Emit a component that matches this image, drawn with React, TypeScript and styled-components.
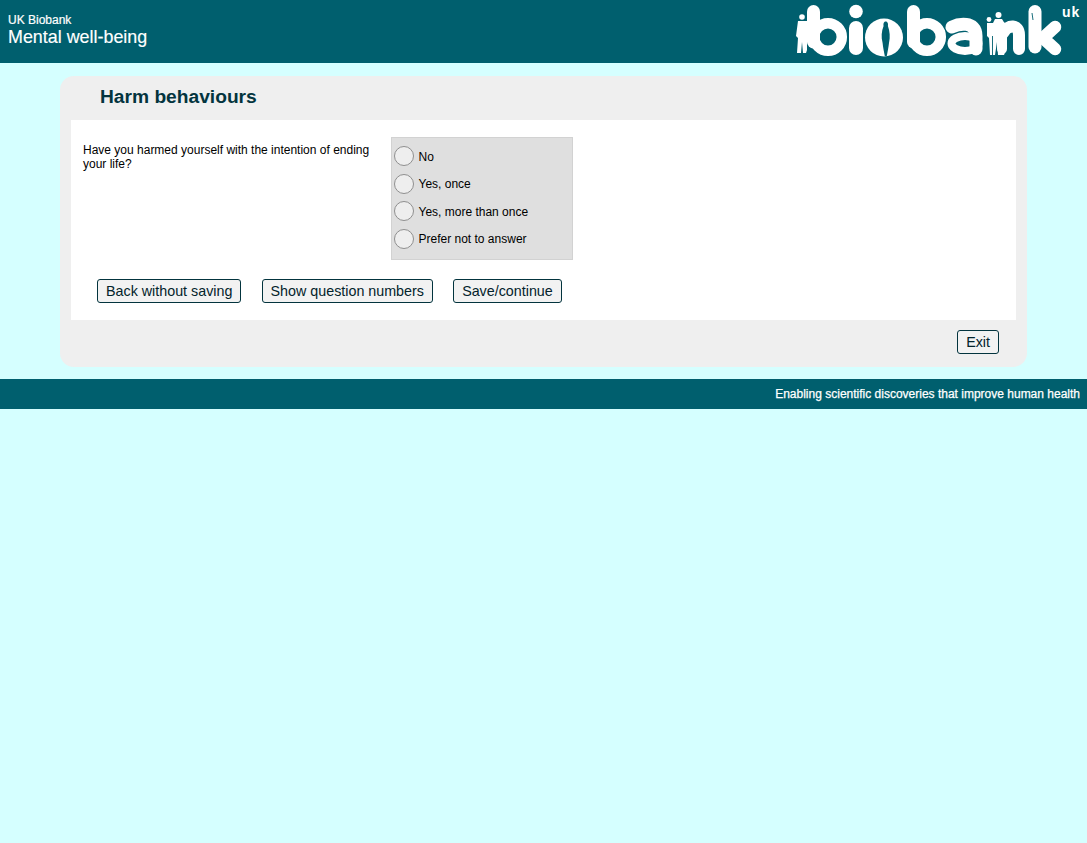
import React from "react"
import styled, { createGlobalStyle } from "styled-components"

const GlobalStyle = createGlobalStyle`
	html, body {
		margin: 0;
		padding: 0;
		background: #d5ffff;
		font-family: "Liberation Sans", Arial, sans-serif;
	}
`

const Page = styled.div`
	min-height: 843px;
	background: #d5ffff;
`

const Header = styled.header`
	height: 63px;
	background: #005f6e;
	color: #fff;
	display: flex;
	justify-content: space-between;
	padding-left: 8px;
`

const Titles = styled.div`
	padding-top: 13px;
`

const Brand = styled.div`
	font-size: 12px;
	line-height: 14px;
	-webkit-text-stroke: 0.2px #fff;
`

const Study = styled.div`
	font-size: 17.9px;
	line-height: 21px;
	-webkit-text-stroke: 0.15px #fff;
`

const Logo = styled.svg`
	width: 307px;
	height: 63px;
	display: block;
`

const Card = styled.main`
	margin: 13px 60px 12px;
	background: #efefef;
	border-radius: 14px;
	padding: 0 11px 13px;
`

const Heading = styled.h1`
	margin: 0;
	height: 44px;
	padding-left: 29px;
	font-size: 19.2px;
	line-height: 41px;
	font-weight: 700;
	color: #03343e;
`

const Body = styled.section`
	background: #fff;
	height: 200px;
	padding: 17px 12px 0;
	box-sizing: border-box;
`

const QuestionRow = styled.div`
	display: flex;
`

const QuestionText = styled.div`
	width: 308px;
	padding-top: 6px;
	font-size: 12px;
	line-height: 14px;
	color: #000;
`

const Options = styled.div`
	width: 182px;
	height: 123px;
	box-sizing: border-box;
	background: #dfdfdf;
	border: 1px solid #d2d2d2;
	padding: 4.25px 0 0 2px;
`

const Option = styled.label`
	display: flex;
	align-items: center;
	height: 27.5px;
	gap: 4.5px;
	font-size: 12px;
	color: #000;
`

const Radio = styled.span`
	width: 20px;
	height: 20px;
	box-sizing: border-box;
	border-radius: 50%;
	background: #eee;
	border: 1.5px solid #8f8f8f;
`

const OptionLabel = styled.span`
	padding-top: 1px;
`

const Actions = styled.div`
	display: flex;
	gap: 20.2px;
	margin-top: 19px;
	padding-left: 14px;
`

const Button = styled.button`
	height: 24px;
	padding: 0 8px;
	box-sizing: border-box;
	font-family: inherit;
	font-size: 14.3px;
	color: #03232b;
	background: #f2f2f2;
	border: 1px solid #03343e;
	border-radius: 3px;
`

const CardFooter = styled.div`
	display: flex;
	justify-content: flex-end;
	padding: 10px 17px 0 0;
`

const Footer = styled.footer`
	height: 30px;
	background: #005f6e;
	color: #fff;
	font-size: 12px;
	line-height: 30px;
	text-align: right;
	padding-right: 7px;
	-webkit-text-stroke: 0.25px #fff;
`

const options = ["No", "Yes, once", "Yes, more than once", "Prefer not to answer"]

const teal = "#005f6e"

// logo is drawn in page coordinates, so the viewBox starts at x 780
function BiobankLogo() {
	return (
		<Logo viewBox="780 0 307 63" aria-label="biobank uk">
			<g fill="none" stroke="#fff" strokeLinecap="round">
				{/* first b */}
				<path d="M813.5 11.5V42" strokeWidth="13" />
				<circle cx="828" cy="37" r="13.8" strokeWidth="10.5" />
				{/* i */}
				<path d="M856 28V48" strokeWidth="14" />
				{/* second b */}
				<path d="M913.5 11.5V42" strokeWidth="13" />
				<circle cx="927" cy="37" r="13.8" strokeWidth="10.5" />
				{/* a */}
				<ellipse cx="965" cy="43.5" rx="13.5" ry="7.5" strokeWidth="8" />
				<path d="M952 27C958 24 976 20 976 36V49" strokeWidth="13" />
				{/* n */}
				<path d="M1002 27V49" strokeWidth="10" />
				<path d="M1003 33C1008 24 1019 24 1019 35V49" strokeWidth="12" />
				{/* k */}
				<path d="M1035 11.5V47" strokeWidth="13" />
				<path d="M1055 27L1043 38L1055 49" strokeWidth="12.5" />
			</g>
			<g fill="#fff">
				{/* dot of the i */}
				<circle cx="856" cy="11.5" r="6.8" />
				{/* o, with a figure cut out of it */}
				<circle cx="884" cy="37.5" r="19" />
				{/* figure left of the first b */}
				<circle cx="802" cy="17" r="2.8" />
				<path d="M798 21H807V50L806 53H803L802 42L801 53H797L798 38L796 36Z" />
				{/* group between a and n */}
				<circle cx="989" cy="19.5" r="2.4" />
				<circle cx="998.5" cy="15" r="3" />
				<path d="M987 23H993L995 19H1002L1005 24L1006 50L1004 55H998L997 42L995 55H990L989 38L987 36Z" />
			</g>
			<path
				d="M885.7 21.5C883.6 21.5 883.2 24 883.6 26C881.5 31 881 37 882.6 43C883 47 884 52 884.8 56H886.8C887.6 52 888.5 47 889 43C890.4 37 889.8 31 887.9 26C888.3 24 887.8 21.5 885.7 21.5Z"
				fill={teal}
			/>
			<path d="M992.5 36V55M1032 13L1033 20" fill="none" stroke={teal} strokeWidth="0.9" />
			<text
				x="1062"
				y="17"
				fill="#fff"
				fontFamily="Liberation Sans, sans-serif"
				fontSize="14"
				fontWeight="700"
				letterSpacing="1"
			>
				uk
			</text>
		</Logo>
	)
}

export default function App() {
	return (
		<Page>
			<GlobalStyle />
			<Header>
				<Titles>
					<Brand>UK Biobank</Brand>
					<Study>Mental well-being</Study>
				</Titles>
				<BiobankLogo />
			</Header>
			<Card>
				<Heading>Harm behaviours</Heading>
				<Body>
					<QuestionRow>
						<QuestionText>
							Have you harmed yourself with the intention of ending your life?
						</QuestionText>
						<Options>
							{options.map((option) => (
								<Option key={option}>
									<Radio />
									<OptionLabel>{option}</OptionLabel>
								</Option>
							))}
						</Options>
					</QuestionRow>
					<Actions>
						<Button>Back without saving</Button>
						<Button>Show question numbers</Button>
						<Button>Save/continue</Button>
					</Actions>
				</Body>
				<CardFooter>
					<Button>Exit</Button>
				</CardFooter>
			</Card>
			<Footer>Enabling scientific discoveries that improve human health</Footer>
		</Page>
	)
}
